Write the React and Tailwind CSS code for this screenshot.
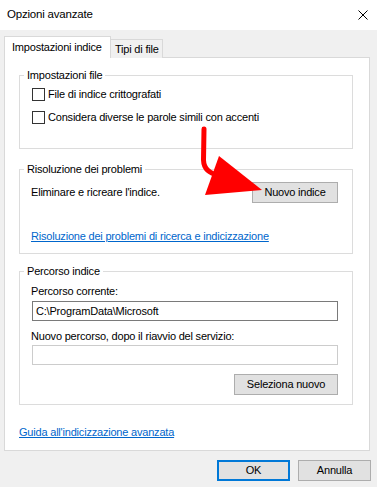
import React from "react";

function Group({ title, className, children }) {
  return (
    <div className={"relative w-[334px] border border-[#dcdcdc] " + className}>
      <span className="absolute left-[4px] top-[-9px] bg-white px-[3px] leading-[16px] whitespace-nowrap">
        {title}
      </span>
      {children}
    </div>
  );
}

function Check({ label }) {
  return (
    <div className="flex items-center h-[13px]">
      <div className="w-[13px] h-[13px] border border-[#333333] bg-white shrink-0" />
      <span className="ml-[3px] leading-[13px] whitespace-nowrap">{label}</span>
    </div>
  );
}

export default function App() {
  return (
    <div className="relative w-[377px] h-[487px] overflow-hidden bg-[#f0f0f0] text-black text-[11px] tracking-[-0.2px] font-['Liberation_Sans',Arial,sans-serif]">
      {/* title bar */}
      <div className="h-[30px] bg-white flex items-center justify-between pl-[7px] pr-[9px]">
        <span className="text-[11.5px]">Opzioni avanzate</span>
        <svg width="10" height="10" viewBox="0 0 10 10" className="block">
          <path d="M0.5 0.5 L9.5 9.5 M9.5 0.5 L0.5 9.5" stroke="#000" strokeWidth="1" fill="none" />
        </svg>
      </div>

      {/* tabs */}
      <div className="mt-[6px] ml-[4px] flex items-end h-[22px] -mb-px relative z-10">
        <div className="w-[107px] h-[22px] border-t border-l border-r border-[#d9d9d9] bg-white flex items-center pl-[7px] pb-[1px] whitespace-nowrap">
          Impostazioni indice
        </div>
        <div className="w-[52px] h-[19px] border-t border-r border-[#d9d9d9] bg-[#f0f0f0] flex items-center pl-[4px] pt-[1px] whitespace-nowrap">
          Tipi di file
        </div>
      </div>

      {/* panel */}
      <div className="ml-[4px] w-[366px] h-[394px] border border-[#d9d9d9] bg-white pl-[14px] pt-[17px] flex flex-col">
        <Group title="Impostazioni file" className="h-[74px] pt-[12px] pl-[12px] flex flex-col gap-[10px]">
          <Check label="File di indice crittografati" />
          <Check label="Considera diverse le parole simili con accenti" />
        </Group>

        <Group title="Risoluzione dei problemi" className="mt-[20px] h-[85px] pt-[12px] flex flex-col">
          <div className="flex items-center justify-between pl-[11px] pr-[14px] h-[21px]">
            <span className="whitespace-nowrap">Eliminare e ricreare l'indice.</span>
            <div className="w-[86px] h-[21px] border border-[#adadad] bg-[#e1e1e1] flex items-center justify-center whitespace-nowrap">
              Nuovo indice
            </div>
          </div>
          <div className="mt-[25px] pl-[11px] leading-[16px] text-[#0066cc] underline whitespace-nowrap">
            Risoluzione dei problemi di ricerca e indicizzazione
          </div>
        </Group>

        <Group title="Percorso indice" className="mt-[17px] h-[134px] pt-[11px] pl-[11px] pr-[14px] flex flex-col">
          <div className="leading-[16px] whitespace-nowrap">Percorso corrente:</div>
          <div className="mt-[2px] ml-[1px] w-[306px] h-[20px] border border-[#7a7a7a] bg-white flex items-center pl-[3px] whitespace-nowrap">
            C:\ProgramData\Microsoft
          </div>
          <div className="mt-[7px] leading-[16px] whitespace-nowrap">Nuovo percorso, dopo il riavvio del servizio:</div>
          <div className="mt-[1px] ml-[1px] w-[306px] h-[20px] border border-[#cccccc] bg-white" />
          <div className="mt-[9px] self-end w-[104px] h-[21px] border border-[#adadad] bg-[#e1e1e1] flex items-center justify-center whitespace-nowrap">
            Seleziona nuovo
          </div>
        </Group>

        <div className="mt-[19px] leading-[16px] text-[#0066cc] underline whitespace-nowrap">
          Guida all'indicizzazione avanzata
        </div>
      </div>

      {/* bottom buttons */}
      <div className="mt-[9px] flex justify-end gap-[8px] pr-[6px]">
        <div className="w-[73px] h-[21px] border-2 border-[#0078d7] bg-[#e1e1e1] flex items-center justify-center">
          OK
        </div>
        <div className="w-[73px] h-[21px] border border-[#adadad] bg-[#e1e1e1] flex items-center justify-center">
          Annulla
        </div>
      </div>

      {/* red arrow annotation */}
      <svg className="absolute left-0 top-0 pointer-events-none z-20" width="377" height="487" viewBox="0 0 377 487">
        <path d="M204 129 L203.5 160 Q204 173 219 175" stroke="#ff0000" strokeWidth="5" fill="none" strokeLinecap="round" />
        <polygon points="219,156 205,195 262,190" fill="#ff0000" />
      </svg>
    </div>
  );
}
